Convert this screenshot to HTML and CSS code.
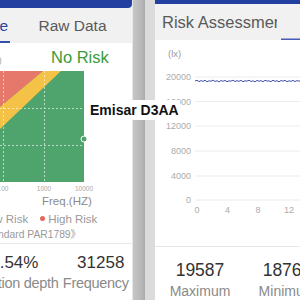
FILE: index.html
```html
<!DOCTYPE html>
<html lang="en">
<head>
<meta charset="utf-8">
<title>Flicker comparison</title>
<link rel="stylesheet" href="styles.css">
</head>
<body>
<div class="stage">
  <section class="phone phone-left">
    <div class="statusbar statusbar-left"></div>
    <nav class="tabs tabs-left">
      <div class="tab tab-active"><span class="tab-label">Risk Assessment</span></div>
      <div class="tab"><span class="tab-label">Raw Data</span></div>
    </nav>
    <div class="verdict">
      <span class="axis-cut">0</span>
      <span class="verdict-text">No Risk</span>
    </div>
    <svg class="risk-chart" width="100" height="121" viewBox="0 0 100 121">
      <rect x="0" y="0" width="84" height="111" fill="#4fa46e"/>
      <polygon points="0,0 43,0 0,36" fill="#e5786b"/>
      <polygon points="43,0 61,0 0,58 0,36" fill="#f4c246"/>
      <g stroke="#ffffff" stroke-width="0.8" stroke-dasharray="2 2" opacity="0.75">
        <line x1="3.5" y1="0" x2="3.5" y2="111"/>
        <line x1="44.5" y1="0" x2="44.5" y2="111"/>
        <line x1="0" y1="37.5" x2="84" y2="37.5"/>
        <line x1="0" y1="74.5" x2="84" y2="74.5"/>
      </g>
      <circle cx="84" cy="68" r="3" fill="#4fa46e" stroke="#ffffff" stroke-width="1"/>
      <g class="tick-left" text-anchor="middle">
        <text x="3" y="119.5">100</text>
        <text x="44" y="119.5">1000</text>
        <text x="84" y="119.5">10000</text>
      </g>
    </svg>
    <div class="freq-label">Freq.(HZ)</div>
    <div class="legend">
      <span class="legend-item"><i class="dot dot-low"></i>Low Risk</span>
      <span class="legend-item"><i class="dot dot-high"></i>High Risk</span>
    </div>
    <div class="standard">《IEEE Standard PAR1789》</div>
    <div class="stats stats-left">
      <div class="stat">
        <div class="stat-value value-shift">11.54%</div>
        <div class="stat-label">Modulation depth</div>
      </div>
      <div class="stat">
        <div class="stat-value value-shift">31258</div>
        <div class="stat-label">Frequency</div>
      </div>
    </div>
  </section>

  <div class="divider">
    <span class="divider-edge"></span>
    <span class="divider-bar"></span>
    <span class="divider-light"></span>
  </div>

  <section class="phone phone-right">
    <div class="statusbar statusbar-right"></div>
    <nav class="tabs tabs-right">
      <div class="tab"><span class="tab-label">Risk Assessment</span></div>
      <div class="tab tab-active-right"><span class="tab-label">Raw Data</span></div>
    </nav>
    <svg class="lux-chart" width="145" height="206" viewBox="0 0 145 206">
      <text class="unit" x="13" y="17">(lx)</text>
      <g stroke="#ececec" stroke-width="1">
        <line x1="40" y1="37" x2="145" y2="37"/>
        <line x1="40" y1="61.5" x2="145" y2="61.5"/>
        <line x1="40" y1="86" x2="145" y2="86"/>
        <line x1="40" y1="111" x2="145" y2="111"/>
        <line x1="40" y1="136" x2="145" y2="136"/>
        <line x1="40" y1="160" x2="145" y2="160"/>
      </g>
      <g class="tick-right" text-anchor="end">
        <text x="36" y="40">20000</text>
        <text x="36" y="64.5">16000</text>
        <text x="36" y="89">12000</text>
        <text x="36" y="114">8000</text>
        <text x="36" y="139">4000</text>
        <text x="36" y="163">0</text>
      </g>
      <polyline fill="none" stroke="#2c40a2" stroke-width="0.9" points="40,41 42,40.3 44,41.6 46,40.6 48,41.4 50,40.2 52,41.8 54,40.8 56,41.2 58,40.1 60,41.5 62,40.7 64,41.9 66,40.5 68,41.3 70,40.4 72,41.7 74,40.9 76,41.1 78,40.2 80,41.6 82,40.6 84,41.4 86,40.3 88,41.8 90,40.7 92,41.2 94,40.2 96,41.5 98,40.8 100,41.9 102,40.4 104,41.3 106,40.6 108,41.7 110,40.3 112,41.1 114,40.9 116,41.6 118,40.2 120,41.4 122,40.7 124,41.8 126,40.5 128,41.2 130,40.3 132,41.7 134,40.8 136,41.3 138,40.4 140,41.6 142,40.6 144,41.2 145,40.8"/>
      <g class="tick-right" text-anchor="middle">
        <text x="42" y="173">0</text>
        <text x="72.5" y="173">4</text>
        <text x="103" y="173">8</text>
        <text x="134" y="173">12</text>
      </g>
    </svg>
    <div class="stats stats-right">
      <div class="stat">
        <div class="stat-value">19587</div>
        <div class="stat-label">Maximum</div>
      </div>
      <div class="stat">
        <div class="stat-value">18763</div>
        <div class="stat-label">Minimum</div>
      </div>
    </div>
  </section>

  <div class="device-tag">Emisar D3AA</div>
</div>
</body>
</html>
```

FILE: styles.css
```css
html, body {
  margin: 0;
  padding: 0;
  background: #ffffff;
}

body {
  font-family: "Liberation Sans", Arial, "Noto Sans CJK SC", sans-serif;
  overflow: hidden;
}

.stage {
  position: relative;
  display: flex;
  width: 300px;
  height: 300px;
  overflow: hidden;
}

.phone {
  display: flex;
  flex-direction: column;
  height: 300px;
  overflow: hidden;
  background: #ffffff;
  flex: none;
}

.phone-left {
  width: 132px;
}

.phone-right {
  width: 145px;
}

.statusbar {
  background: #2340a0;
  flex: none;
}

.statusbar-left {
  height: 8px;
  border-bottom-right-radius: 4px;
}

.statusbar-right {
  height: 4px;
}

.tabs {
  display: flex;
  flex: none;
  background: #f1f1f1;
}

.tabs-left {
  height: 35px;
  margin-left: -116px;
}

.tabs-right {
  height: 36px;
}

.tab {
  flex: none;
  box-sizing: border-box;
  width: 126px;
  padding: 0 4px 0 7px;
  color: #5a5a5a;
}

.tab-label {
  display: block;
  overflow: hidden;
  white-space: nowrap;
  text-align: center;
}

.tabs-left .tab {
  padding: 0 1px 0 0;
  font-size: 15.5px;
  line-height: 35px;
}

.tabs-left .tab-active {
  padding: 0 2px 0 19px;
}

.tabs-right .tab {
  font-size: 16.5px;
  line-height: 36px;
}

.tab-active {
  color: #2d46a6;
  box-shadow: inset 0 -2px 0 #3550b0;
}

.tab-active-right {
  box-shadow: inset 0 -1.5px 0 #4a5cb6;
}

.verdict {
  display: flex;
  align-items: center;
  height: 28px;
  flex: none;
}

.axis-cut {
  margin-left: -4px;
  margin-top: 9px;
  width: 7px;
  font-size: 10px;
  color: #b0b0b0;
}

.verdict-text {
  margin-left: 48px;
  font-size: 16.5px;
  color: #3a9a3c;
}

.risk-chart {
  display: block;
  flex: none;
  overflow: visible;
}

.tick-left text {
  font-size: 6.5px;
  fill: #a8a8a8;
}

.freq-label {
  height: 18px;
  line-height: 18px;
  padding-left: 42px;
  font-size: 11.5px;
  color: #8a8a8a;
  white-space: nowrap;
  flex: none;
}

.legend {
  display: flex;
  align-items: center;
  gap: 11.5px;
  height: 17px;
  margin-left: -27px;
  font-size: 11.5px;
  color: #9a9a9a;
  white-space: nowrap;
  flex: none;
}

.legend-item {
  display: flex;
  align-items: center;
  gap: 3.5px;
  flex: none;
}

.dot {
  display: block;
  width: 5px;
  height: 5px;
  border-radius: 50%;
}

.dot-low {
  background: #f4c246;
}

.dot-high {
  background: #e5685c;
}

.standard {
  height: 16px;
  line-height: 16px;
  margin-left: -54px;
  font-size: 10.3px;
  color: #9a9a9a;
  white-space: nowrap;
  flex: none;
}

.stats {
  display: grid;
  border-top: 1px solid #e8e8e8;
  flex: none;
}

.stats-left {
  grid-template-columns: 90.5px 90.5px;
  margin-left: -40px;
  padding-top: 9px;
}

.stats-right {
  grid-template-columns: 87px 87px;
  padding-left: 1.5px;
  padding-top: 12px;
}

.stat {
  display: flex;
  flex-direction: column;
  align-items: center;
  min-width: 0;
}

.stat-value {
  font-size: 17px;
  line-height: 20px;
  color: #333333;
  white-space: nowrap;
}

.stats-right .stat-value {
  font-size: 17.5px;
  line-height: 22px;
}

.value-shift {
  padding-left: 10px;
}

.stat-label {
  display: flex;
  justify-content: center;
  width: 100%;
  font-size: 14.5px;
  line-height: 21px;
  color: #8a8a8a;
  white-space: nowrap;
}

.stats-left .stat-label {
  letter-spacing: -0.3px;
}

.stats-right .stat-label {
  font-size: 14px;
}

.divider {
  display: flex;
  width: 23px;
  height: 300px;
  flex: none;
}

.divider-edge {
  width: 1px;
  background: #e6e6e6;
}

.divider-bar {
  width: 12px;
  background: linear-gradient(to right, #c6c6c6, #b7b7b7 70%, #aaaaaa);
}

.divider-light {
  width: 10px;
  background: #dbdbdb;
}

.lux-chart {
  display: block;
  flex: none;
}

.lux-chart .unit {
  font-size: 9.5px;
  fill: #9a9a9a;
}

.tick-right text {
  font-size: 9px;
  fill: #ababab;
}

.device-tag {
  position: absolute;
  left: 86px;
  top: 100px;
  width: 94px;
  height: 20px;
  box-sizing: border-box;
  padding-left: 4px;
  line-height: 20px;
  background: #ffffff;
  font-size: 14px;
  font-weight: bold;
  color: #111111;
  white-space: nowrap;
}
```
